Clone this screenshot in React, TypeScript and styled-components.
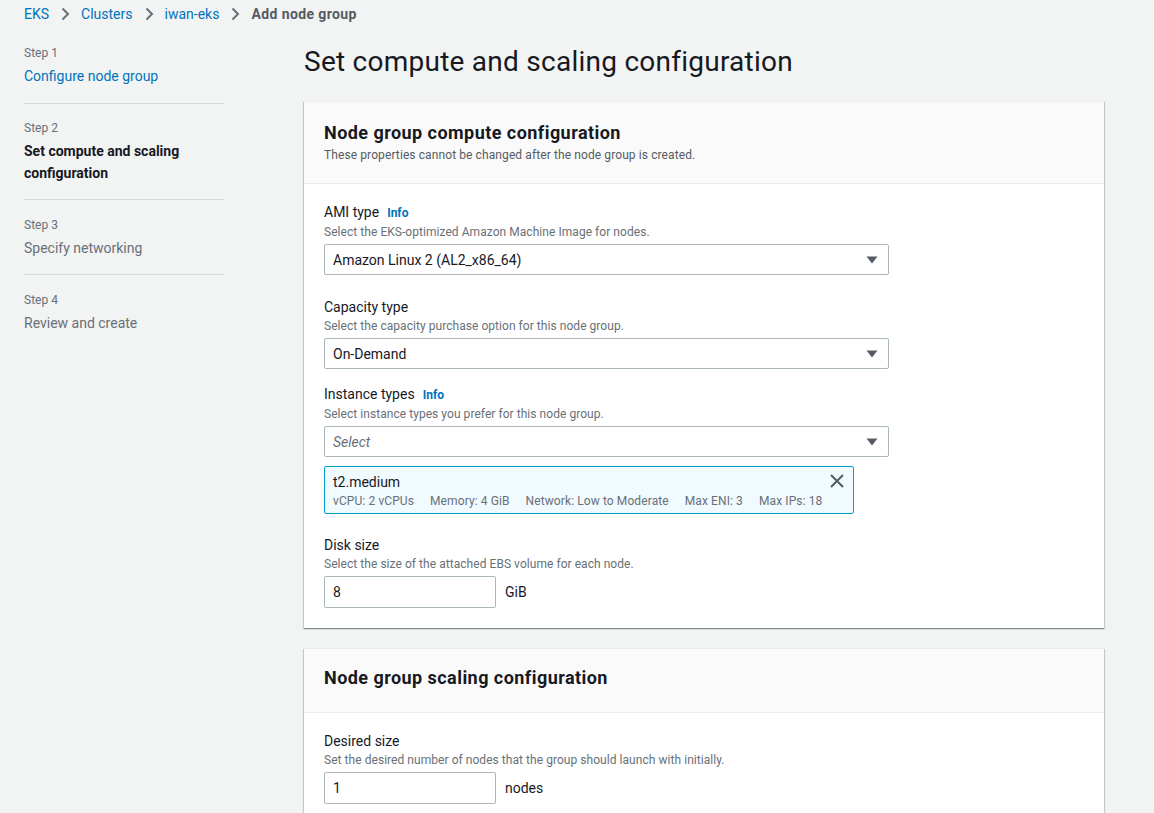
import React from "react";
import styled, { createGlobalStyle } from "styled-components";

const Global = createGlobalStyle`
  html, body { margin: 0; padding: 0; background: #f2f3f3; }
  body { font-family: Roboto, "Noto Sans", Arial, sans-serif; color: #16191f; -webkit-font-smoothing: antialiased; }
  * { box-sizing: border-box; }
`;

const Page = styled.div`
  width: 1154px;
  height: 813px;
  overflow: hidden;
  background: #f2f3f3;
`;

const Breadcrumbs = styled.nav`
  display: flex;
  align-items: center;
  height: 28px;
  padding: 0 0 0 24px;
  font-size: 14px;
  gap: 11px;
`;

const Crumb = styled.a<{ $current?: boolean }>`
  color: ${(p) => (p.$current ? "#545b64" : "#0073bb")};
  font-weight: ${(p) => (p.$current ? 700 : 400)};
  letter-spacing: ${(p) => (p.$current ? "0.4px" : "0")};
  text-decoration: none;
`;

const Chevron = () => (
  <svg width="10" height="14" viewBox="0 0 10 14">
    <path d="M2.5 1.5 L8 7 L2.5 12.5" fill="none" stroke="#687078" strokeWidth="2" />
  </svg>
);

const Layout = styled.div`
  display: flex;
  padding-top: 12px;
`;

const Side = styled.aside`
  width: 200px;
  margin-left: 24px;
  flex-shrink: 0;
`;

const StepItem = styled.div<{ $last?: boolean; $first?: boolean }>`
  padding: ${(p) => (p.$first ? "5px" : "4px")} 0 ${(p) => (p.$last ? "0" : p.$first ? "16px" : "15px")};
  margin-bottom: ${(p) => (p.$first ? "12px" : "13px")};
  border-bottom: ${(p) => (p.$last ? "none" : "1px solid #d5dbdb")};
`;

const StepNum = styled.div`
  font-size: 12px;
  line-height: 16px;
  color: #687078;
  margin-bottom: 4px;
`;

const StepTitle = styled.div<{ $state: "link" | "active" | "idle" }>`
  font-size: 14px;
  line-height: 22px;
  color: ${(p) => (p.$state === "link" ? "#0073bb" : p.$state === "active" ? "#16191f" : "#687078")};
  font-weight: ${(p) => (p.$state === "active" ? 700 : 400)};
`;

const Main = styled.main`
  margin-left: 80px;
  width: 800px;
`;

const PageTitle = styled.h1`
  margin: 0;
  font-size: 28px;
  font-weight: 400;
  line-height: 36px;
  letter-spacing: 0.25px;
  color: #16191f;
  padding: 4px 0 21px;
`;

const Panel = styled.section`
  background: #fff;
  border-top: 1px solid #eaeded;
  box-shadow: 0 1px 1px 0 rgba(0, 28, 36, 0.3), 1px 1px 1px 0 rgba(0, 28, 36, 0.15), -1px 1px 1px 0 rgba(0, 28, 36, 0.15);
  margin-bottom: 20px;
`;

const PanelHeader = styled.header<{ $solo?: boolean }>`
  background: #fafafa;
  border-bottom: 1px solid #eaeded;
  padding: ${(p) => (p.$solo ? "17px 20px 22px" : "19px 20px 19px")};
`;

const PanelTitle = styled.h2`
  margin: 0;
  font-size: 18px;
  line-height: 24px;
  font-weight: 700;
  letter-spacing: 0.45px;
  color: #16191f;
`;

const PanelDesc = styled.p`
  margin: 1px 0 0;
  font-size: 12px;
  line-height: 18px;
  letter-spacing: 0.1px;
  color: #545b64;
`;

const PanelBody = styled.div`
  padding: 17px 20px 20px;
  display: flex;
  flex-direction: column;
`;

const Field = styled.div<{ $gap?: number }>`
  display: flex;
  flex-direction: column;
  margin-top: ${(p) => p.$gap ?? 0}px;
`;

const Label = styled.label`
  font-size: 14px;
  line-height: 22px;
  color: #16191f;
  display: flex;
  align-items: baseline;
  gap: 8px;
`;

const Info = styled.a`
  font-size: 12px;
  font-weight: 700;
  color: #0073bb;
`;

const Hint = styled.div`
  font-size: 12px;
  line-height: 16px;
  letter-spacing: 0.05px;
  color: #687078;
  margin-bottom: 4px;
`;

const SelectBox = styled.div<{ $placeholder?: boolean }>`
  width: 565px;
  height: 31px;
  border: 1px solid #aab7b8;
  border-radius: 2px;
  display: flex;
  align-items: center;
  justify-content: space-between;
  padding: 0 10px 0 8px;
  font-size: 14px;
  color: ${(p) => (p.$placeholder ? "#687078" : "#16191f")};
  font-style: ${(p) => (p.$placeholder ? "italic" : "normal")};
`;

const Caret = () => (
  <svg width="12" height="8" viewBox="0 0 12 8">
    <path d="M0.5 0.5 H11.5 L6 7.5 Z" fill="#545b64" />
  </svg>
);

const Token = styled.div`
  margin-top: 9px;
  width: 530px;
  border: 1px solid #00a1c9;
  border-radius: 2px;
  background: #f1faff;
  padding: 6px 8px 4px;
  position: relative;
`;

const TokenName = styled.div`
  font-size: 14px;
  line-height: 18px;
  color: #16191f;
`;

const TokenMeta = styled.div`
  display: flex;
  gap: 16px;
  margin-top: 2px;
  font-size: 12px;
  line-height: 16px;
  letter-spacing: 0.1px;
  color: #687078;
`;

const Dismiss = styled.button`
  position: absolute;
  top: 6px;
  right: 8px;
  border: 0;
  background: none;
  padding: 0;
  display: flex;
`;

const InputRow = styled.div`
  display: flex;
  align-items: center;
  gap: 9px;
`;

const TextInput = styled.div`
  width: 172px;
  height: 32px;
  border: 1px solid #aab7b8;
  border-radius: 2px;
  padding: 0 8px;
  display: flex;
  align-items: center;
  font-size: 14px;
  color: #16191f;
`;

const Unit = styled.span`
  font-size: 14px;
  color: #16191f;
`;

const metas = ["vCPU: 2 vCPUs", "Memory: 4 GiB", "Network: Low to Moderate", "Max ENI: 3", "Max IPs: 18"];

export default function App() {
  return (
    <Page>
      <Global />
      <Breadcrumbs>
        <Crumb>EKS</Crumb>
        <Chevron />
        <Crumb>Clusters</Crumb>
        <Chevron />
        <Crumb>iwan-eks</Crumb>
        <Chevron />
        <Crumb $current>Add node group</Crumb>
      </Breadcrumbs>
      <Layout>
        <Side>
          <StepItem $first>
            <StepNum>Step 1</StepNum>
            <StepTitle $state="link">Configure node group</StepTitle>
          </StepItem>
          <StepItem>
            <StepNum>Step 2</StepNum>
            <StepTitle $state="active">Set compute and scaling configuration</StepTitle>
          </StepItem>
          <StepItem>
            <StepNum>Step 3</StepNum>
            <StepTitle $state="idle">Specify networking</StepTitle>
          </StepItem>
          <StepItem $last>
            <StepNum>Step 4</StepNum>
            <StepTitle $state="idle">Review and create</StepTitle>
          </StepItem>
        </Side>
        <Main>
          <PageTitle>Set compute and scaling configuration</PageTitle>
          <Panel>
            <PanelHeader>
              <PanelTitle>Node group compute configuration</PanelTitle>
              <PanelDesc>These properties cannot be changed after the node group is created.</PanelDesc>
            </PanelHeader>
            <PanelBody>
              <Field>
                <Label>
                  AMI type <Info>Info</Info>
                </Label>
                <Hint>Select the EKS-optimized Amazon Machine Image for nodes.</Hint>
                <SelectBox>
                  Amazon Linux 2 (AL2_x86_64)
                  <Caret />
                </SelectBox>
              </Field>
              <Field $gap={21}>
                <Label>Capacity type</Label>
                <Hint>Select the capacity purchase option for this node group.</Hint>
                <SelectBox>
                  On-Demand
                  <Caret />
                </SelectBox>
              </Field>
              <Field $gap={14}>
                <Label>
                  Instance types <Info>Info</Info>
                </Label>
                <Hint>Select instance types you prefer for this node group.</Hint>
                <SelectBox $placeholder>
                  Select
                  <Caret />
                </SelectBox>
                <Token>
                  <TokenName>t2.medium</TokenName>
                  <TokenMeta>
                    {metas.map((m) => (
                      <span key={m}>{m}</span>
                    ))}
                  </TokenMeta>
                  <Dismiss>
                    <svg width="16" height="16" viewBox="0 0 16 16">
                      <path d="M2 2 L14 14 M14 2 L2 14" stroke="#545b64" strokeWidth="2" fill="none" />
                    </svg>
                  </Dismiss>
                </Token>
              </Field>
              <Field $gap={20}>
                <Label>Disk size</Label>
                <Hint>Select the size of the attached EBS volume for each node.</Hint>
                <InputRow>
                  <TextInput>8</TextInput>
                  <Unit>GiB</Unit>
                </InputRow>
              </Field>
            </PanelBody>
          </Panel>
          <Panel>
            <PanelHeader $solo>
              <PanelTitle>Node group scaling configuration</PanelTitle>
            </PanelHeader>
            <PanelBody>
              <Field>
                <Label>Desired size</Label>
                <Hint>Set the desired number of nodes that the group should launch with initially.</Hint>
                <InputRow>
                  <TextInput>1</TextInput>
                  <Unit>nodes</Unit>
                </InputRow>
              </Field>
            </PanelBody>
          </Panel>
        </Main>
      </Layout>
    </Page>
  );
}
